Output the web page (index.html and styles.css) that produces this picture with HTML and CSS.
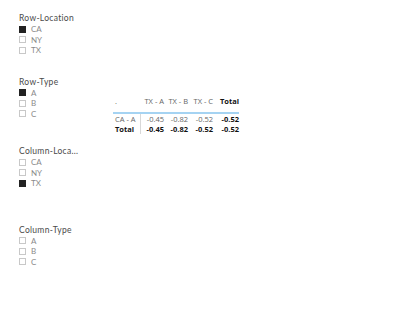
FILE: index.html
```html
<!DOCTYPE html>
<html>
<head>
<meta charset="utf-8">
<link rel="stylesheet" href="styles.css">
</head>
<body>
<div class="canvas">
  <div class="slicers">
    <div class="slicer s1">
      <div class="title">Row-Location</div>
      <div class="item"><span class="box on"></span>CA</div>
      <div class="item"><span class="box"></span>NY</div>
      <div class="item"><span class="box"></span>TX</div>
    </div>
    <div class="slicer s2">
      <div class="title">Row-Type</div>
      <div class="item"><span class="box on"></span>A</div>
      <div class="item"><span class="box"></span>B</div>
      <div class="item"><span class="box"></span>C</div>
    </div>
    <div class="slicer s3">
      <div class="title">Column-Loca...</div>
      <div class="item"><span class="box"></span>CA</div>
      <div class="item"><span class="box"></span>NY</div>
      <div class="item"><span class="box on"></span>TX</div>
    </div>
    <div class="slicer s4">
      <div class="title">Column-Type</div>
      <div class="item"><span class="box"></span>A</div>
      <div class="item"><span class="box"></span>B</div>
      <div class="item"><span class="box"></span>C</div>
    </div>
  </div>
  <table class="matrix">
    <thead>
      <tr>
        <th class="c1">.</th>
        <th class="c2">TX - A</th>
        <th class="c3">TX - B</th>
        <th class="c4">TX - C</th>
        <th class="c5 strong">Total</th>
      </tr>
    </thead>
    <tbody>
      <tr class="first">
        <td class="c1 rowhead">CA - A</td>
        <td class="c2">-0.45</td>
        <td class="c3">-0.82</td>
        <td class="c4">-0.52</td>
        <td class="c5 strong">-0.52</td>
      </tr>
      <tr class="total">
        <td class="c1 rowhead strong">Total</td>
        <td class="c2 strong">-0.45</td>
        <td class="c3 strong">-0.82</td>
        <td class="c4 strong">-0.52</td>
        <td class="c5 strong">-0.52</td>
      </tr>
    </tbody>
  </table>
</div>
</body>
</html>
```
FILE: styles.css
```css
html, body {
  margin: 0;
  padding: 0;
  background: #ffffff;
}
body {
  width: 399px;
  height: 314px;
  overflow: hidden;
  font-family: "Open Sans", "Liberation Sans", sans-serif;
}
.canvas {
  display: flex;
  align-items: flex-start;
}
.slicers {
  display: flex;
  flex-direction: column;
  padding-left: 19px;
  width: 113px;
  box-sizing: border-box;
  flex: none;
}
.slicer.s1 { margin-top: 12px; }
.slicer.s2 { margin-top: 20px; }
.slicer.s3 { margin-top: 27px; }
.slicer.s4 { margin-top: 36px; }
.title {
  font-family: "Lato", "Liberation Sans", sans-serif;
  font-size: 8.5px;
  line-height: 12px;
  height: 12px;
  color: #4a4a4a;
  letter-spacing: 0.3px;
  white-space: nowrap;
}
.slicer.s3 .title, .slicer.s4 .title { height: 11px; line-height: 11px; }
.item {
  display: flex;
  align-items: center;
  height: 10.5px;
  font-family: "Lato", "Liberation Sans", sans-serif;
  font-size: 8px;
  color: #8a8a8a;
  white-space: nowrap;
}
.box {
  width: 5px;
  height: 5px;
  border: 1px solid #c8c8c8;
  margin-right: 5px;
  flex: none;
}
.box.on {
  background: #222222;
  border-color: #222222;
}
.matrix {
  margin-top: 95px;
  border-collapse: collapse;
  font-family: "Open Sans", "Liberation Sans", sans-serif;
  font-size: 7.5px;
  color: #666666;
  table-layout: fixed;
}
.matrix th, .matrix td {
  padding: 0;
  line-height: 10px;
  text-align: right;
  font-weight: normal;
  white-space: nowrap;
}
.matrix thead th {
  padding-top: 1px;
  padding-bottom: 6px;
  border-bottom: 2px solid #a5d3f2;
}
.matrix .c1 { width: 25px; text-align: left; padding-left: 2px; }
.matrix .c2 { width: 23px; }
.matrix .c3 { width: 24px; }
.matrix .c4 { width: 25px; }
.matrix .c5 { width: 26px; }
.matrix td.rowhead { border-right: 1px solid #d8d8d8; }
.matrix .strong { font-weight: bold; color: #111111; }
```
